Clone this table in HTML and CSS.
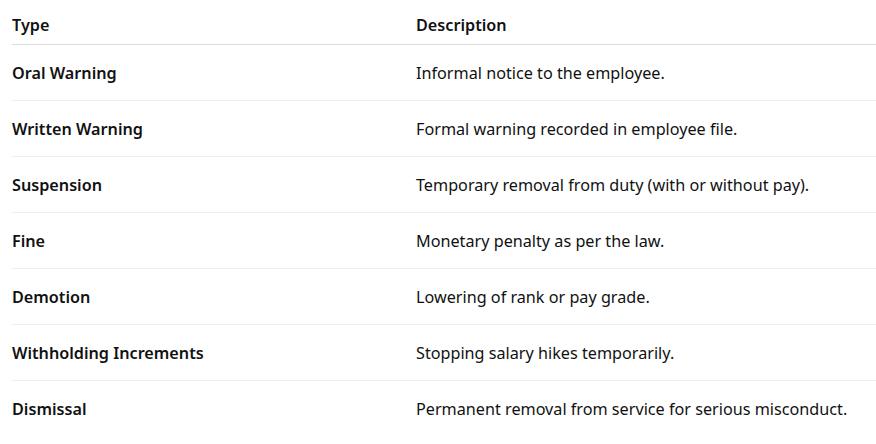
FILE: index.html
```html
<!DOCTYPE html>
<html>
<head>
<meta charset="utf-8">
<link rel="stylesheet" href="styles.css">
</head>
<body>
<div class="wrap">
<table class="tbl">
<thead>
<tr><th class="c1">Type</th><th class="c2">Description</th></tr>
</thead>
<tbody>
<tr><td class="c1">Oral Warning</td><td class="c2">Informal notice to the employee.</td></tr>
<tr><td class="c1">Written Warning</td><td class="c2">Formal warning recorded in employee file.</td></tr>
<tr><td class="c1">Suspension</td><td class="c2">Temporary removal from duty (with or without pay).</td></tr>
<tr><td class="c1">Fine</td><td class="c2">Monetary penalty as per the law.</td></tr>
<tr><td class="c1">Demotion</td><td class="c2">Lowering of rank or pay grade.</td></tr>
<tr><td class="c1">Withholding Increments</td><td class="c2">Stopping salary hikes temporarily.</td></tr>
<tr><td class="c1">Dismissal</td><td class="c2">Permanent removal from service for serious misconduct.</td></tr>
</tbody>
</table>
</div>
</body>
</html>
```
FILE: styles.css
```css
html, body {
  margin: 0;
  padding: 0;
  background: #fff;
}
.wrap {
  padding-left: 12px;
}
.tbl {
  width: 864px;
  border-collapse: collapse;
  font-family: "Noto Sans", "Open Sans", sans-serif;
  font-size: 16.2px;
  color: #111;
}
.tbl th {
  text-align: left;
  font-weight: 600;
  line-height: 24px;
  padding: 13px 0 7px 0;
  border-bottom: 1px solid #dcdcdc;
}
.tbl td {
  line-height: 24px;
  padding: 16px 0 15px 0;
  border-bottom: 1px solid #efefef;
}
.tbl tbody tr:last-child td {
  border-bottom: none;
}
.tbl td.c1 {
  font-weight: 600;
}
.c1 {
  width: 404px;
}
```
